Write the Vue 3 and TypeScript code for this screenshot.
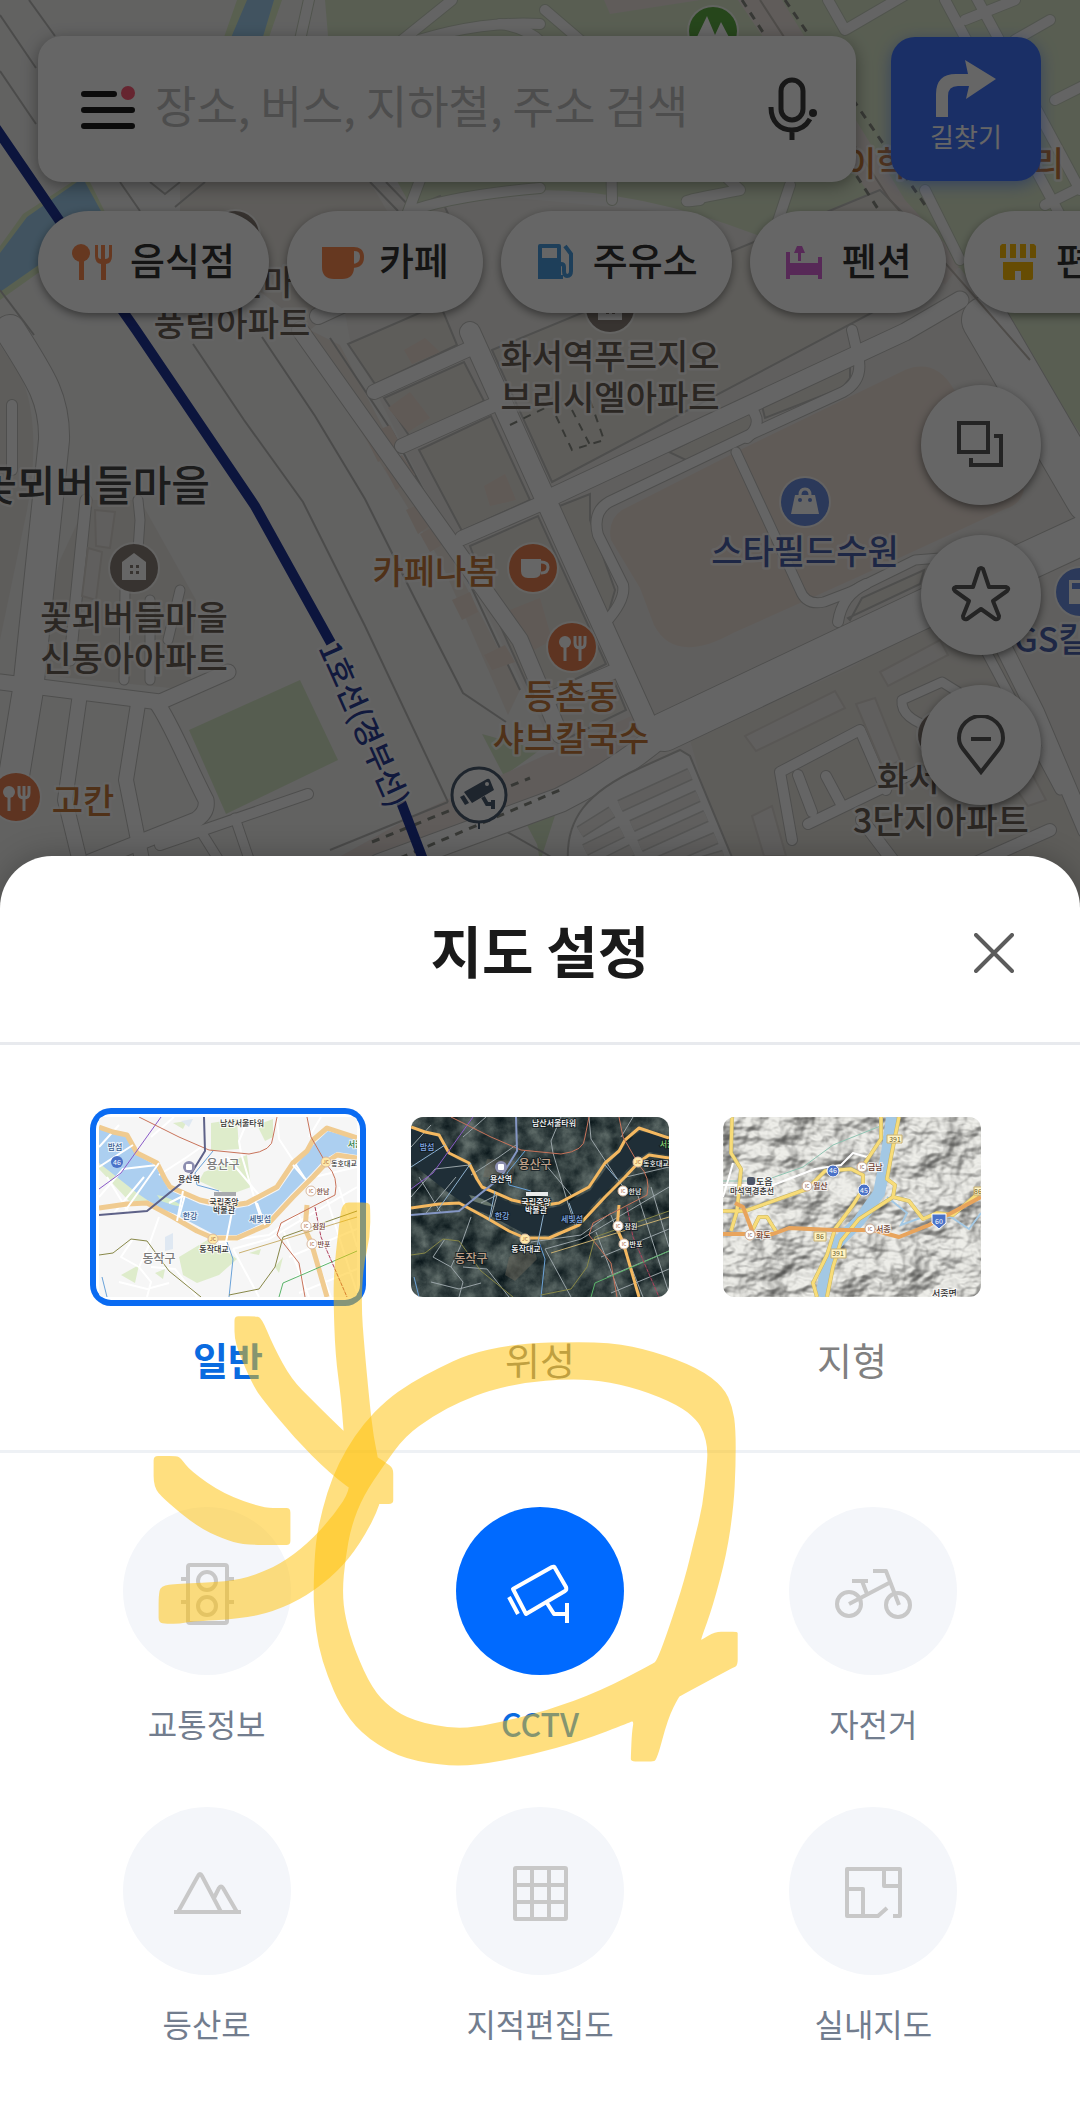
<script setup lang="ts">
import { ref } from 'vue'

type Point = [number, number]

interface Poi {
  kind: 'house' | 'cafe' | 'food' | 'bag' | 'gas' | 'tree'
  x: number
  y: number
}

interface MapLabel {
  text: string
  x: number
  y: number
  tone: 'brown' | 'orange' | 'blue' | 'town'
  anchor?: 'start' | 'middle' | 'end'
}

const keyword = ref('')
const mapType = ref('normal')
const active = ref<string[]>(['cctv'])

const chips = [
  { id: 'food', label: '음식점' },
  { id: 'cafe', label: '카페' },
  { id: 'gas', label: '주유소' },
  { id: 'pension', label: '펜션' },
  { id: 'store', label: '편의점' },
]

const mapTypes = [
  { id: 'normal', label: '일반' },
  { id: 'satellite', label: '위성' },
  { id: 'terrain', label: '지형' },
]

const features = [
  { id: 'traffic', label: '교통정보' },
  { id: 'cctv', label: 'CCTV' },
  { id: 'bike', label: '자전거' },
  { id: 'hiking', label: '등산로' },
  { id: 'cadastral', label: '지적편집도' },
  { id: 'indoor', label: '실내지도' },
]

function toggle(id: string) {
  active.value = active.value.includes(id)
    ? active.value.filter((f) => f !== id)
    : [...active.value, id]
}

const labels: MapLabel[] = [
  { text: '진마', x: 294, y: 295, tone: 'brown', anchor: 'end' },
  { text: '풍림아파트', x: 232, y: 336, tone: 'brown' },
  { text: '화서역푸르지오', x: 610, y: 369, tone: 'brown' },
  { text: '브리시엘아파트', x: 610, y: 410, tone: 'brown' },
  { text: '꽃뫼버들마을', x: 210, y: 501, tone: 'town', anchor: 'end' },
  { text: '꽃뫼버들마을', x: 134, y: 630, tone: 'brown' },
  { text: '신동아아파트', x: 134, y: 671, tone: 'brown' },
  { text: '화서', x: 877, y: 791, tone: 'brown', anchor: 'start' },
  { text: '3단지아파트', x: 941, y: 833, tone: 'brown' },
  { text: '카페나봄', x: 435, y: 584, tone: 'orange' },
  { text: '등촌동', x: 571, y: 709, tone: 'orange' },
  { text: '샤브칼국수', x: 571, y: 751, tone: 'orange' },
  { text: '고칸', x: 83, y: 813, tone: 'orange' },
  { text: '이학', x: 845, y: 176, tone: 'orange', anchor: 'start' },
  { text: '리', x: 1064, y: 176, tone: 'orange', anchor: 'end' },
  { text: '스타필드수원', x: 805, y: 564, tone: 'blue' },
  { text: 'GS칼텍스', x: 1014, y: 652, tone: 'blue', anchor: 'start' },
]

const pois: Poi[] = [
  { kind: 'house', x: 235, y: 235 },
  { kind: 'house', x: 610, y: 308 },
  { kind: 'house', x: 134, y: 568 },
  { kind: 'house', x: 942, y: 735 },
  { kind: 'cafe', x: 533, y: 568 },
  { kind: 'food', x: 572, y: 647 },
  { kind: 'food', x: 16, y: 797 },
  { kind: 'bag', x: 805, y: 502 },
  { kind: 'gas', x: 1080, y: 592 },
  { kind: 'tree', x: 713, y: 31 },
]

const blocks = [
  '348,344 440,304 457,345 375,384',
  '384,398 464,362 484,401 410,437',
  '419,450 491,416 530,500 462,531',
  '470,546 538,516 606,664 534,700 500,625',
  '548,706 612,676 626,710 560,742',
  '300,260 372,226 392,270 318,302',
  '388,218 440,196 470,262 410,290',
  '492,350 880,190 930,240 896,300 552,482',
  '669,452 752,411 757,425 740,440 690,462',
  '762,406 850,364 850,378 842,388 765,418',
  '552,509 590,494 590,520 615,590 604,628',
  '850,620 862,598 924,570 920,584 848,618',
]

const pinkLots = [
  '388,408 410,392 430,418 408,432',
  '365,436 390,425 402,448 378,462',
  '385,468 402,455 415,475 396,490',
  '406,510 428,500 438,520 418,534',
  '420,534 442,522 450,540 430,552',
  '452,600 470,592 478,612 462,620',
  '484,655 505,645 515,662 492,670',
  '484,486 505,474 516,500 490,506',
  '510,610 540,598 552,640 525,655',
  '404,350 425,338 440,352 412,364',
]

const smallHouses = [
  '88,548 102,552 96,600 82,596',
  '95,510 115,512 110,548 96,546',
  '745,736 835,691 845,708 756,751',
  '856,704 875,698 900,760 884,770',
  '880,672 940,640 948,655 888,686',
  '752,816 772,806 786,856 764,856',
  '1010,780 1030,770 1046,800 1028,806',
]

const casedRoads = [
  { d: 'M10 330 C42 380 55 400 54 440 L28 690 L10 800', w: 30 },
  { d: 'M86 500 L70 660', w: 11 },
  { d: 'M12 405 L12 470', w: 10 },
  { d: 'M138 500 L140 520 L136 580', w: 9 },
  { d: 'M125 590 L124 680 M150 600 L150 680 M180 590 L168 640', w: 9 },
  { d: 'M0 682 L160 702 L228 672', w: 15 },
  { d: 'M156 702 C170 720 190 770 206 800 Q208 812 196 820 L90 862', w: 15 },
  { d: 'M80 694 L65 800 L82 870', w: 14 },
  { d: 'M138 704 L126 780 L142 860', w: 14 },
  { d: 'M160 845 L308 794', w: 10 },
  { d: 'M200 830 L220 862 M235 818 L250 862', w: 9 },
  { d: 'M470 332 L652 735', w: 20 },
  { d: 'M374 392 L478 345 M402 446 L500 402 M462 538 L540 504 M538 704 L622 668', w: 14 },
  { d: 'M318 316 L470 246 M300 330 L520 640 L560 735', w: 16 },
  { d: 'M545 500 L905 332 L960 300', w: 17 },
  { d: 'M852 330 L858 356 Q864 380 843 392 L747 436 L609 502 Q592 512 598 535 L623 585 Q626 600 605 623', w: 10 },
  { d: 'M748 405 Q766 422 747 438', w: 10 },
  { d: 'M736 452 L800 590 Q806 606 824 602 L850 592 L915 560 L940 558', w: 9 },
  { d: 'M838 622 Q842 595 866 584', w: 10 },
  { d: 'M985 320 L1090 500', w: 46 },
  { d: 'M664 732 L930 606 L1090 532', w: 38 },
  { d: 'M664 732 Q620 770 560 800 L380 866', w: 24 },
  { d: 'M1000 640 L1036 712 L1086 830', w: 16 },
  { d: 'M980 640 L1060 790', w: 9 },
  { d: 'M792 840 L780 772 L860 730 L886 790 M798 775 L812 812 M826 776 L842 806 M808 824 L920 770', w: 10 },
  { d: 'M940 730 Q900 720 902 700 L942 682 L958 692', w: 9 },
  { d: 'M862 820 L900 870 M1050 830 L960 870', w: 12 },
]

const parkRoads = [
  'M310 -5 L300 40',
  'M452 0 L390 50 Q470 20 540 24',
  'M500 24 Q550 30 560 80 L610 90 L612 200',
  'M545 10 L580 40 L740 190 Q660 205 700 200',
  'M790 185 L775 230',
  'M828 0 L845 30 L905 -5',
  'M945 0 L1060 215 M975 -5 L1080 190 M965 20 L1015 0 M1015 40 L1050 20',
  'M1055 100 L1085 85 M1045 205 L1085 185',
  'M420 180 L408 212 Q450 196 540 188',
  'M925 190 L960 260',
]

const thinLines = [
  'M29 0 L55 36 M0 15 L36 68 M0 71 L36 124',
  'M120 182 L140 211 M150 182 L165 194 L180 182 M175 207 L205 182',
  'M0 290 L34 335',
  'M193 344 L244 420 L303 502 L365 626 L448 802',
  'M262 337 L315 416 L365 499 L413 595 L463 693 L506 722',
  'M330 338 L393 433 L448 537 L496 640 L520 690',
  'M370 182 L398 211 M386 182 L414 211',
  'M495 825 L560 862 M448 802 L330 850',
]

const parkingRows = [
  'M580 832 L612 812 M620 806 L690 774',
  'M585 850 L622 832 M632 826 L698 796',
  'M600 866 L632 850 M640 846 L706 816',
  'M650 866 L716 838',
  'M690 866 L724 856',
]

const riverShape = 'M0 12 L28 20 L38 38 L56 48 L70 73 L101 87 L128 93 L150 89 L180 73 L198 47 L216 26 L229 14 L258 22 L258 38 L238 35 L226 42 L212 57 L192 77 L166 105 L138 118 L116 118 L76 97 L60 91 L38 76 L0 46 Z'
const northRoad = 'M0 10 L14 15 L28 18 L38 36 L58 46 L66 62 L71 70 L101 83 L128 89 L148 86 L178 70 L194 46 L208 34 L214 23 L228 11 L258 21'
const southRoad = 'M0 91 L28 87 L48 86 L74 100 L98 114 L114 121 L138 121 L168 108 L194 80 L214 60 L228 45 L238 38 L258 41'
const localRoads = 'M0 80 L24 52 L58 48 M15 96 L45 60 M8 60 L30 96 M70 86 L86 78 L80 100 M60 100 L50 128 L40 150 L52 165 L48 180 M34 122 L22 140 L40 150 M52 150 L76 152 L98 180 M20 165 L48 172 L70 166 M105 28 L88 40 L60 58 M150 0 L140 24 L142 36 L158 90 L164 108 M178 0 L180 22 L205 60 L216 75 M134 132 L160 180 M134 132 L170 122 L258 70 M128 40 L145 60 L160 78 M185 115 L210 180 M200 98 L232 180 M215 60 L258 50 M190 140 L258 112 M196 160 L258 134 M200 176 L258 152 M226 76 L258 176 M240 70 L258 130 M210 20 L222 0 M0 30 L20 8 M75 0 L52 20 M120 125 L170 118 L200 96'
const miniLabels = [
  { text: '남산서울타워', x: 143, y: 9, s: 8, c: 'dark' },
  { text: '밤섬', x: 16, y: 33, s: 8, c: 'water' },
  { text: '용산구', x: 124, y: 52, s: 12, c: 'gu' },
  { text: '용산역', x: 90, y: 65, s: 8, c: 'dark' },
  { text: '국립중앙', x: 125, y: 88, s: 8, c: 'dark' },
  { text: '박물관', x: 125, y: 96, s: 8, c: 'dark' },
  { text: '한강', x: 91, y: 102, s: 8, c: 'water' },
  { text: '세빛섬', x: 161, y: 105, s: 8, c: 'water' },
  { text: '동작대교', x: 115, y: 135, s: 8, c: 'dark' },
  { text: '동작구', x: 60, y: 146, s: 12, c: 'gu' },
  { text: '동호대교', x: 245, y: 49, s: 7, c: 'dark' },
  { text: '한남', x: 224, y: 77, s: 7, c: 'ramp' },
  { text: '잠원', x: 220, y: 112, s: 7, c: 'ramp' },
  { text: '반포', x: 225, y: 130, s: 7, c: 'ramp' },
  { text: '서울', x: 256, y: 30, s: 8, c: 'park' },
]
const ramps = [
  { x: 227, y: 45, t: 'JC' },
  { x: 114, y: 122, t: 'JC' },
  { x: 212, y: 74, t: 'IC' },
  { x: 207, y: 109, t: 'IC' },
  { x: 213, y: 127, t: 'IC' },
]

/* Closed curve that passes through the midpoints of the given outline. */
function smooth(points: Point[]): string {
  const mid = (a: Point, b: Point) => `${(a[0] + b[0]) / 2} ${(a[1] + b[1]) / 2}`
  const n = points.length
  let d = `M${mid(points[n - 1], points[0])}`
  points.forEach((p, i) => {
    d += ` Q${p[0]} ${p[1]} ${mid(p, points[(i + 1) % n])}`
  })
  return d + 'Z'
}

const ringOuter: Point[] = [
  [738, 1636], [738, 1633], [728, 1633], [715, 1633], [702, 1641], [701, 1641], [713, 1608], [727, 1555],
  [734, 1507], [736, 1467], [736, 1430], [733, 1408], [724, 1388], [699, 1369], [654, 1352], [611, 1343],
  [547, 1343], [508, 1346], [468, 1355], [438, 1369], [410, 1384], [386, 1401], [363, 1425], [346, 1450],
  [332, 1478], [322, 1510], [315, 1543], [313, 1590], [314, 1617], [318, 1648], [327, 1677], [340, 1707],
  [360, 1734], [396, 1758], [440, 1767], [476, 1767], [529, 1757], [583, 1742], [630, 1724], [634, 1722],
  [632, 1734], [631, 1758], [631, 1763], [640, 1763], [652, 1763], [657, 1762], [668, 1720], [679, 1698],
  [681, 1697], [733, 1669], [738, 1667], [738, 1655],
]
const ringInner: Point[] = [
  [708, 1450], [704, 1433], [697, 1421], [679, 1406], [640, 1390], [600, 1381], [565, 1380], [526, 1383],
  [490, 1391], [461, 1402], [433, 1417], [405, 1437], [383, 1467], [363, 1497], [351, 1527], [345, 1560],
  [342, 1593], [345, 1620], [355, 1653], [372, 1690], [390, 1709], [413, 1722], [456, 1731], [494, 1725],
  [547, 1712], [601, 1692], [653, 1665], [657, 1662], [669, 1630], [685, 1580], [694, 1543], [703, 1507],
  [707, 1467],
]
const arrowShaft: Point[] = [
  [342, 1203], [355, 1203], [369, 1203], [370, 1208], [370, 1237], [363, 1267], [361, 1307], [364, 1347],
  [369, 1400], [373, 1437], [381, 1475], [382, 1503], [360, 1545], [337, 1573], [307, 1597], [273, 1613],
  [240, 1620], [188, 1623], [180, 1625], [166, 1625], [158, 1624], [158, 1614], [158, 1597], [160, 1587],
  [177, 1585], [227, 1583], [253, 1577], [280, 1565], [307, 1545], [333, 1517], [352, 1488], [345, 1457],
  [341, 1400], [335, 1357], [333, 1297], [334, 1267], [339, 1223],
]
const arrowHead: Point[] = [
  [234, 1326], [234, 1317], [242, 1317], [254, 1317], [261, 1318], [273, 1347], [291, 1380], [312, 1401],
  [353, 1442], [386, 1464], [393, 1469], [393, 1480], [393, 1498], [393, 1505], [384, 1505], [370, 1505],
  [360, 1497], [330, 1475], [293, 1438], [262, 1400], [253, 1387], [238, 1353], [234, 1338],
]
const arrowTip: Point[] = [
  [153, 1466], [153, 1457], [162, 1457], [176, 1457], [180, 1459], [190, 1472], [223, 1495], [263, 1509],
  [282, 1509], [290, 1509], [290, 1518], [290, 1538], [290, 1546], [282, 1546], [243, 1546], [223, 1540],
  [197, 1528], [163, 1500], [153, 1488],
]
const ringPath = smooth(ringOuter) + ' ' + smooth(ringInner)
const arrowPath = [arrowShaft, arrowHead, arrowTip].map(smooth).join(' ')
</script>

<template>
  <div class="screen">
    <div class="map-area">
      <svg class="map" viewBox="0 0 1080 920" preserveAspectRatio="xMidYMin slice" aria-hidden="true">
        <rect width="1080" height="920" fill="#f4f4f3" />
        <path d="M320 180 L1080 250 L1080 920 L740 900 L560 760 L350 340Z" fill="#f0eeeb" />
        <path d="M180 182 L370 182 L410 250 L310 330 L180 230Z" fill="#eae6e0" />
        <path d="M0 345 L20 375 C38 410 36 470 25 520 L0 640Z" fill="#ece9e3" />
        <path d="M88 500 L140 500 L196 600 L190 690 L30 674 L60 560Z" fill="#ece9e3" />
        <path d="M310 330 L340 345 L520 690 L508 715 L440 560 L360 430Z" fill="#efe9e2" />
        <path d="M325 0 H1080 V433 L1005 330 L960 268 L880 250 L757 235 Q640 190 540 190 Q470 194 413 210 L330 60Z" fill="#deebce" />
        <path d="M738 0 L782 0 L905 200 L962 262 L945 285 L880 210Z" fill="#efe6e2" />
        <path d="M604 0 L700 0 L610 14Z" fill="#efe6e2" />
        <path d="M237 0 H282 L268 40 H223Z M0 246 L23 214 L72 182 H90 L106 214 L62 256 L0 300Z" fill="#dff0c8" />
        <path d="M247 0 H274 L262 40 H230Z M0 253 L27 217 L77 182 L85 182 L102 213 L60 250 L0 292Z" fill="#a2d0f0" />
        <path d="M189 730 L300 680 L338 760 L226 814Z M482 734 L540 750 L504 776Z M517 806 L560 786 L540 850Z M530 800 L560 800 L540 862Z" fill="#d8e8c8" />
        <path d="M690 740 L850 668 L920 626 L1010 640 L1080 800 V920 H740Z" fill="#ebe8e2" />
        <path d="M740 450 L905 370 Q935 358 953 388 L1024 490 Q1020 505 1005 509 L871 571 L809 599 L733 633 Q675 665 654 625 L640 588 L611 540 Q607 520 622 510Z" fill="#f0e3da" />
        <path d="M330 862 L420 812 L640 712 L690 735 L540 800 L400 862Z" fill="#efe6e2" />

        <path v-for="d in thinLines" :key="d" :d="d" class="thin" />
        <polygon v-for="p in blocks" :key="p" :points="p" class="block" />
        <polygon v-for="p in pinkLots" :key="p" :points="p" fill="#f0e0d6" />
        <g v-for="r in casedRoads" :key="r.d" fill="none" stroke-linecap="round" stroke-linejoin="round">
          <path :d="r.d" stroke="#c3c3c0" :stroke-width="r.w + 2" />
        </g>
        <g v-for="r in casedRoads" :key="r.d + 'f'" fill="none" stroke-linecap="round" stroke-linejoin="round">
          <path :d="r.d" stroke="#fdfdfd" :stroke-width="r.w" />
        </g>
        <polygon v-for="p in smallHouses" :key="p" :points="p" class="house" />
        <g fill="none" stroke-linejoin="round" stroke-linecap="round">
          <path v-for="d in parkRoads" :key="d" :d="d" stroke="#c9d2c0" stroke-width="12" />
          <path v-for="d in parkRoads" :key="d + 'f'" :d="d" stroke="#fbfbfa" stroke-width="10" />
        </g>
        <path d="M583 808 Q600 786 640 768 L680 750 L690 756 L734 862 H568 Q566 830 583 808Z" fill="#fafafa" stroke="#c3c3c0" stroke-width="2" />
        <g fill="none" stroke="#d4d4d1" stroke-width="13">
          <path v-for="d in parkingRows" :key="d" :d="d" />
        </g>
        <g fill="none" stroke="#efeeec" stroke-width="10">
          <path v-for="d in parkingRows" :key="d + 'f'" :d="d" />
        </g>
        <g fill="none" stroke="#8a8d84" stroke-width="3" stroke-dasharray="8 7">
          <path d="M742 0 L882 215 M785 0 L925 205" />
          <path d="M372 842 L530 778 M400 858 L560 790" />
          <path d="M556 416 L572 450 L604 440 L590 400 M572 410 L590 445 M510 425 L545 408" stroke-width="2" />
        </g>
        <path d="M760 0 L890 200 L1030 360" fill="none" stroke="#c3bdb6" stroke-width="2" />
        <path d="M-4 128 L59 220 L136 330 L255 506 L331 643" class="rail" />
        <path d="M401 802 L424 862" class="rail" />

        <g v-for="(p, i) in pois" :key="i" :transform="`translate(${p.x} ${p.y})`">
          <circle r="26" fill="#ffffff" opacity=".7" />
          <template v-if="p.kind === 'house'">
            <circle r="24" fill="#8b8079" />
            <path d="M-12 12 V-6 L0 -15 L12 -6 V12Z" fill="#fff" />
            <path d="M-4 -3h3v3h-3zM2 -3h3v3h-3zM-4 3h3v3h-3zM2 3h3v3h-3z" fill="#8b8079" />
          </template>
          <template v-else-if="p.kind === 'cafe'">
            <circle r="24" fill="#ec8353" />
            <path d="M-12 -9 H8 V3 Q8 10 1 10 H-5 Q-12 10 -12 3Z" fill="#fff" />
            <path d="M8 -6 Q15 -6 15 -1 Q15 5 8 5" fill="none" stroke="#fff" stroke-width="3" />
          </template>
          <template v-else-if="p.kind === 'food'">
            <circle r="24" fill="#ec8353" />
            <circle cx="-7" cy="-5" r="6" fill="#fff" />
            <path d="M-7 0V14M8 -11V14M3 -11V-4Q3 1 8 1Q13 1 13 -4V-11" fill="none" stroke="#fff" stroke-width="3" />
          </template>
          <template v-else-if="p.kind === 'bag'">
            <circle r="24" fill="#6c8ee0" />
            <path d="M-10 -7H10L14 12H-14Z" fill="#fff" />
            <path d="M-5 -7Q-5 -13 0 -13Q5 -13 5 -7" fill="none" stroke="#fff" stroke-width="3" />
            <circle cx="-5" cy="-2" r="2" fill="#6c8ee0" /><circle cx="5" cy="-2" r="2" fill="#6c8ee0" />
          </template>
          <template v-else-if="p.kind === 'gas'">
            <circle r="24" fill="#6c8ee0" />
            <path d="M-11 -12H6V12H-11Z" fill="#fff" /><path d="M-8 -9H3V-3H-8Z" fill="#6c8ee0" />
          </template>
          <template v-else>
            <circle r="24" fill="#5fae45" />
            <path d="M-18 10 L-6 -15 L2 4 L8 -9 L18 10Z" fill="#fff" />
          </template>
        </g>

        <g transform="translate(479 795)">
          <path d="M0 27V34" stroke="#4c5c70" stroke-width="2" />
          <circle r="27" fill="#fff" stroke="#4c5c70" stroke-width="3" />
          <path d="M-15 -3 L8 -16 Q10 -17 11 -15 L15 -5 L-7 8Z M-19 2 L-15 0 L-10 8 L-14 10Z" fill="#4c5c70" />
          <path d="M4 2 L8 9 H14 M14 5V14" fill="none" stroke="#4c5c70" stroke-width="4" />
          <circle cx="8" cy="-11" r="2" fill="#fff" />
        </g>

        <text v-for="(l, i) in labels" :key="i" :x="l.x" :y="l.y" :text-anchor="l.anchor ?? 'middle'" :class="['place', l.tone]">{{ l.text }}</text>
        <text class="place line-name" transform="translate(318 648) rotate(66)">1호선(경부선)</text>
      </svg>

      <div class="controls">
        <header class="top-bar">
          <form class="search" role="search" @submit.prevent>
            <button type="button" class="plain menu" aria-label="메뉴">
              <svg width="54" height="48" viewBox="0 0 54 48">
                <path d="M3 9H33M3 25H51M3 41H51" stroke="#1c1c1c" stroke-width="6" stroke-linecap="round" />
                <circle cx="47" cy="8" r="7" fill="#ff5c78" />
              </svg>
            </button>
            <input v-model="keyword" type="text" placeholder="장소, 버스, 지하철, 주소 검색" aria-label="장소, 버스, 지하철, 주소 검색" />
            <button type="button" class="plain mic" aria-label="음성 검색">
              <svg width="50" height="64" viewBox="0 0 50 64" fill="none" stroke="#3c3c3c" stroke-width="5">
                <rect x="13" y="3" width="22" height="40" rx="11" />
                <path d="M3 30C3 46 13 53 24 53C33 53 38 49 42 42M24 53V63" />
                <circle cx="45" cy="36" r="4" fill="#3c3c3c" stroke="none" />
              </svg>
            </button>
          </form>
          <button type="button" class="directions">
            <svg width="60" height="58" viewBox="0 0 60 58">
              <path d="M0 57V34Q0 14 20 14H32L29 0L60 19L30 39L33 26H22Q12 26 12 36V57Z" fill="#fff" />
            </svg>
            <span>길찾기</span>
          </button>
        </header>

        <nav class="chips" aria-label="주변 검색">
          <button v-for="c in chips" :key="c.id" type="button" class="chip">
            <svg width="40" height="40" viewBox="0 0 40 40">
              <g v-if="c.id === 'food'" fill="#ff8c52">
                <circle cx="9" cy="11" r="9" /><path d="M7 18H12V38H7Z" />
                <path d="M23 3H26V14Q26 17 29 17V3H33V17Q37 17 37 14V3H40V14Q40 21 34 22V38H29V22Q23 21 23 14Z" />
              </g>
              <g v-else-if="c.id === 'cafe'">
                <path d="M1 5H33V25Q33 37 21 37H13Q1 37 1 25Z" fill="#ff8c52" />
                <path d="M31 7Q41 6 41 15Q41 24 31 24" fill="none" stroke="#ff8c52" stroke-width="4" />
              </g>
              <g v-else-if="c.id === 'gas'">
                <path fill-rule="evenodd" d="M5 2H24Q26 2 26 4V33H28V37H3V4Q3 2 5 2ZM7 6V16H22V6Z" fill="#4b9fe0" />
                <path d="M30 4L36 12V29Q36 34 32 34Q29 34 29 29V25Q29 22 26 22" fill="none" stroke="#4b9fe0" stroke-width="4" />
              </g>
              <g v-else-if="c.id === 'pension'" fill="#d968d9">
                <path d="M2 10H6V21H34V15H38V37H34V33H6V37H2Z M13 4H18L21 11H10Z M14 11H17V19H14Z" />
              </g>
              <g v-else fill="#ffbd08">
                <path d="M4 2H8V16H2V4ZM12 2H18V16H12ZM22 2H28V16H22ZM32 2H36L38 4V16H32Z" />
                <path d="M5 20H35V36Q35 38 33 38H23V29H17V38H7Q5 38 5 36Z" />
              </g>
            </svg>
            <span>{{ c.label }}</span>
          </button>
        </nav>

        <div class="tools">
          <button type="button" class="round" aria-label="지도 설정">
            <svg width="60" height="60" viewBox="0 0 60 60" fill="none" stroke="#5a5a5a" stroke-width="4">
              <path d="M8 8H37V37H8ZM43 21H50V50H20V43" />
            </svg>
          </button>
          <button type="button" class="round" aria-label="즐겨찾기">
            <svg width="60" height="60" viewBox="0 0 60 60" fill="none" stroke="#5a5a5a" stroke-width="4" stroke-linejoin="round">
              <path d="M28 4Q30 2 32 4L38 22H55Q59 23 56 26L42 36L48 51Q48 55 44 54L30 44L16 54Q12 55 12 51L18 36L4 26Q1 23 5 22H22Z" />
            </svg>
          </button>
          <button type="button" class="round" aria-label="핀 숨기기">
            <svg width="60" height="60" viewBox="0 0 60 60" fill="none" stroke="#5a5a5a" stroke-width="4">
              <path d="M30 57L12 34Q8 29 8 23A22 22 0 0 1 52 23Q52 29 48 34ZM20 24H40" />
            </svg>
          </button>
        </div>
      </div>
      <div class="scrim"></div>
    </div>

    <section class="sheet" role="dialog" aria-labelledby="sheet-title">
      <header class="sheet-head">
        <h1 id="sheet-title">지도 설정</h1>
        <button type="button" class="plain close" aria-label="닫기">
          <svg width="40" height="40" viewBox="0 0 40 40">
            <path d="M2 2L38 38M38 2L2 38" stroke="#5c5c5c" stroke-width="4" stroke-linecap="round" />
          </svg>
        </button>
      </header>

      <div class="types" role="radiogroup" aria-label="지도 종류">
        <label v-for="t in mapTypes" :key="t.id" class="type">
          <input v-model="mapType" type="radio" name="map-type" :value="t.id" />
          <span class="thumb">
            <svg v-if="t.id !== 'terrain'" :class="['mini', t.id]" viewBox="0 0 258 180">
              <defs v-if="t.id === 'satellite'">
                <filter id="ground" x="0" y="0" width="100%" height="100%" color-interpolation-filters="sRGB">
                  <feTurbulence type="fractalNoise" baseFrequency="0.06" numOctaves="5" seed="4" />
                  <feColorMatrix values="0.5 0 0 0 -0.03  0.5 0 0 0 0.02  0.46 0 0 0 0.04  0 0 0 0 1" />
                </filter>
              </defs>
              <rect v-if="t.id === 'normal'" width="258" height="180" fill="#f6f6f6" />
              <rect v-else width="258" height="180" filter="url(#ground)" />
              <g v-if="t.id === 'normal'" fill="#deeccb">
                <path d="M112 6L138 2L140 32L112 34Z M105 55L148 38L152 70L130 78L100 64Z M80 140L110 122L138 142L120 158L98 166L84 158Z M22 158L40 148L36 166Z M56 156L66 152L64 162Z M74 6L88 4L84 12Z M158 8L174 2L174 20L166 24Z M176 150L184 140L180 156Z M0 40L22 60L50 84L30 84L0 52Z M150 136L162 132L160 138Z" />
                <path d="M66 120L74 116L74 132L66 134Z M82 4L94 2L90 10Z" fill="#dfe8f2" />
              </g>
              <path v-else d="M98 140L122 128L126 142L104 164L94 158Z M76 42L104 44L102 62L72 60Z" fill="#6f685c" opacity=".45" />
              <path :d="riverShape" class="river" />
              <path d="M58 78Q72 80 84 90Q72 88 62 84Z" :fill="t.id === 'normal' ? '#d3ebc9' : '#65736a'" />
              <path :d="localRoads" class="local" />
              <path :d="northRoad" class="bank" />
              <path :d="southRoad" class="bank" />
              <path d="M208 88L206 112L212 125L228 180" class="bank" />
              <path d="M0 50L34 28M26 94L60 46M78 104L84 74M158 86L166 108M194 48L206 62M134 90L126 130" class="bridge" />
              <g fill="none" stroke-width="1">
                <path d="M0 72L22 56L62 0" stroke="#8a5ac8" />
                <path d="M40 0L80 20L110 33L150 37Q174 34 174 20L178 0M208 0L212 20L228 48Q240 60 236 78L182 106L178 118L200 146L206 180" stroke="#c8735a" />
                <path d="M105 0L106 34L90 60L48 94L0 98" :stroke="t.id === 'normal' ? '#5e6288' : '#8496c4'" stroke-width="2" />
                <path d="M114 34L96 56L98 68L120 74M128 125L134 142L130 180M3 160L8 180" stroke="#6aa2d8" />
                <path d="M0 138L14 136L32 122L48 124L70 154L102 180M130 178L160 172L176 150L184 120L258 94" stroke="#878748" />
                <path d="M180 180L184 166L258 134" stroke="#5bb46a" />
                <path d="M216 90L222 120L248 180" stroke="#b0405c" stroke-dasharray="4 1" />
                <path d="M140 136L258 100" stroke="#c9b070" />
              </g>
              <path d="M115 75H137V79H115Z" :fill="t.id === 'normal' ? '#a8aaae' : '#e8eaea'" />
              <g v-for="r in ramps" :key="r.x">
                <circle :cx="r.x" :cy="r.y" r="5" :fill="r.t === 'JC' ? '#ffe9a8' : '#fff'" stroke="#d9b9a0" stroke-width="1" />
                <text :x="r.x" :y="r.y + 2" font-size="5" text-anchor="middle" fill="#a35a30">{{ r.t }}</text>
              </g>
              <circle cx="90" cy="50" r="6" fill="#8c8eb0" />
              <rect x="87" y="47" width="6" height="6" rx="1" fill="#fff" />
              <g v-if="t.id === 'normal'">
                <circle cx="18" cy="45" r="6" fill="#4a72c8" />
                <text x="18" y="48" font-size="7" text-anchor="middle" fill="#fff">46</text>
              </g>
              <text v-for="l in miniLabels" :key="l.text" :x="l.x" :y="l.y" :font-size="l.s" text-anchor="middle" :class="['mini-label', l.c]">{{ l.text }}</text>
            </svg>

            <svg v-else class="mini" viewBox="0 0 258 180">
              <defs>
                <filter id="relief" x="0" y="0" width="100%" height="100%" color-interpolation-filters="sRGB">
                  <feTurbulence type="fractalNoise" baseFrequency="0.022 0.03" numOctaves="4" seed="11" />
                  <feDiffuseLighting surfaceScale="16" diffuseConstant="1.1" lighting-color="#e4e4e0">
                    <feDistantLight azimuth="225" elevation="58" />
                  </feDiffuseLighting>
                </filter>
              </defs>
              <rect width="258" height="180" fill="#dcdcd8" />
              <rect width="258" height="180" filter="url(#relief)" opacity=".6" />
              <path d="M169 0L164 36L156 76L136 104L112 128L104 150L98 180" fill="none" stroke="#a3c8e4" stroke-width="12" />
              <path d="M164 80L184 96L178 108L200 100L228 100L246 112L258 96" fill="none" stroke="#a3c8e4" stroke-width="2" />
              <g fill="none" stroke-linejoin="round">
                <path d="M0 64H40L80 50L110 28L160 8" stroke="#8fc4b2" />
                <path d="M0 68H50L92 52L118 48L130 36L144 40L158 24M0 80L6 60L10 46" stroke="#fff" stroke-width="2" />
                <g stroke="#c4b468" stroke-width="4">
                  <path d="M9 0L8 36L18 52L14 94L8 114M0 94H22L84 72L102 54L128 52L140 58V72L130 88L112 112L104 138L90 166L94 180M158 0V22L142 46M176 0L168 40L164 62L172 68L170 80L136 102L118 124L110 150L104 180M170 80L186 84L200 102L214 96L230 98L258 74M30 112L36 100L44 100L54 116" />
                </g>
                <g stroke="#f8dc78" stroke-width="3">
                  <path d="M9 0L8 36L18 52L14 94L8 114M0 94H22L84 72L102 54L128 52L140 58V72L130 88L112 112L104 138L90 166L94 180M158 0V22L142 46M176 0L168 40L164 62L172 68L170 80L136 102L118 124L110 150L104 180M170 80L186 84L200 102L214 96L230 98L258 74M30 112L36 100L44 100L54 116" />
                </g>
                <path d="M0 117H50L66 111L110 113H150L176 120L206 108L258 80M12 86L20 90L30 116" stroke="#e8a45c" stroke-width="4" />
              </g>
              <g fill="#4a72c8" stroke="#fff" stroke-width="1">
                <circle cx="110" cy="54" r="6" /><circle cx="141" cy="73" r="6" />
                <path d="M209 97H223V106L216 112L209 106Z" />
              </g>
              <g font-size="7" text-anchor="middle" fill="#fff">
                <text x="110" y="56">46</text><text x="141" y="76">45</text><text x="216" y="107">60</text>
              </g>
              <g fill="#fff4c4" stroke="#c8b070" stroke-width="1">
                <path d="M164 18H179V26H164ZM108 132H123V141H108ZM91 115H103V124H91ZM251 70H262V78H251Z" />
              </g>
              <g font-size="7" text-anchor="middle" fill="#6b5a28">
                <text x="172" y="25">391</text><text x="115" y="139">391</text><text x="97" y="122">86</text><text x="255" y="77">86</text>
              </g>
              <g fill="#fff" stroke="#c8a890" stroke-width="1">
                <circle cx="139" cy="50" r="5" /><circle cx="84" cy="69" r="5" /><circle cx="27" cy="118" r="5" /><circle cx="147" cy="112" r="5" />
              </g>
              <g font-size="5" text-anchor="middle" fill="#805040">
                <text x="139" y="52">IC</text><text x="84" y="71">IC</text><text x="27" y="120">IC</text><text x="147" y="114">IC</text>
              </g>
              <rect x="24" y="60" width="8" height="8" rx="2" fill="#4d5668" />
              <g class="mini-label ramp" font-size="8">
                <text x="145" y="53">금남</text><text x="90" y="72">월산</text><text x="33" y="121">화도</text><text x="153" y="115">서종</text>
              </g>
              <g class="mini-label dark" font-size="8">
                <text x="33" y="68" font-size="9">도읍</text><text x="7" y="77">마석역경춘선</text><text x="209" y="180" font-size="9">서종면</text>
              </g>
            </svg>
          </span>
          <span class="type-name">{{ t.label }}</span>
        </label>
      </div>

      <div class="features">
        <button v-for="f in features" :key="f.id" type="button" class="plain feature" :aria-pressed="active.includes(f.id)" @click="toggle(f.id)">
          <span class="disc">
            <svg width="168" height="168" viewBox="0 0 168 168" fill="none" stroke="currentColor" stroke-width="4" stroke-linejoin="round">
              <g v-if="f.id === 'traffic'">
                <rect x="65" y="58" width="39" height="58" rx="2" />
                <circle cx="84" cy="74" r="9" /><circle cx="84" cy="99" r="9" />
                <path d="M58 72H65M104 72H111M58 95H65M104 95H111" />
              </g>
              <g v-else-if="f.id === 'cctv'">
                <path d="M57 82L96 60Q98 59 99 61L110 80Q111 83 109 84L70 107Z" />
                <path d="M53 90L62 107M91 96L98 107H111M111 96V116" />
              </g>
              <g v-else-if="f.id === 'bike'">
                <circle cx="60" cy="97" r="12" /><circle cx="109" cy="98" r="12" />
                <path d="M60 97L100 76M84 64H97L110 98M63 74H79M73 74L78 87" />
              </g>
              <g v-else-if="f.id === 'hiking'">
                <path d="M51 105H118M55 105L75 69Q77 65 79 69L98 105M91 91L96 81Q98 78 100 81L114 105" />
              </g>
              <g v-else-if="f.id === 'cadastral'">
                <rect x="59" y="61" width="51" height="51" rx="1" />
                <path d="M76 61V112M93 61V112M59 78H110M59 95H110" />
              </g>
              <g v-else>
                <path d="M98 101L89 109H58V62H111V109H104M58 82H74V109M95 62V79H111" />
              </g>
            </svg>
          </span>
          <span class="feature-name">{{ f.label }}</span>
        </button>
      </div>

      <svg class="marker" viewBox="0 856 1080 1260" preserveAspectRatio="xMidYMin meet" aria-hidden="true">
        <path :d="ringPath" fill-rule="evenodd" />
        <path :d="arrowPath" />
      </svg>
    </section>
  </div>
</template>

<style>
body {
  margin: 0;
  background: #ffffff;
}
</style>

<style scoped>
.screen {
  font-family: 'Noto Sans CJK KR', 'Noto Sans', sans-serif;
  overflow: hidden;
}

button,
input {
  font-family: inherit;
}

.plain {
  display: flex;
  padding: 0;
  border: 0;
  background: none;
}

.map-area {
  position: relative;
  height: 908px;
  overflow: hidden;
}

.map {
  position: absolute;
  inset: 0;
  width: 100%;
  height: 100%;
}

.thin {
  fill: none;
  stroke: #bcbcba;
  stroke-width: 2;
}

.block {
  fill: #ece9e2;
  stroke: #c3c3c0;
  stroke-width: 2;
}

.house {
  fill: #f1eeea;
  stroke: #dedad4;
  stroke-width: 2;
}

.rail {
  fill: none;
  stroke: #203598;
  stroke-width: 10;
}

.place {
  font-size: 34px;
  font-weight: 500;
  paint-order: stroke;
  stroke: #ffffffb0;
  stroke-width: 5px;
  stroke-linejoin: round;
}

.brown {
  fill: #6d6159;
}

.orange {
  fill: #c87c3c;
}

.blue {
  fill: #4c63ac;
}

.town {
  font-size: 42px;
  fill: #484848;
}

.line-name {
  font-size: 30px;
  fill: #2b3f9a;
}

.controls {
  position: relative;
  padding: 36px 39px 0 38px;
}

.top-bar {
  display: flex;
  align-items: center;
  gap: 35px;
}

.search {
  flex: 1;
  min-width: 0;
  display: flex;
  align-items: center;
  height: 146px;
  box-sizing: border-box;
  padding: 0 38px 0 43px;
  border-radius: 24px;
  background: #ffffff;
  box-shadow: 0 4px 16px #00000060;
}

.search input {
  flex: 1;
  min-width: 0;
  padding: 0 0 8px 20px;
  border: 0;
  background: none;
  font-size: 45px;
  line-height: 60px;
  color: #222222;
  outline: none;
}

.search input::placeholder {
  color: #c0c0c0;
  opacity: 1;
}

.directions {
  display: flex;
  flex-direction: column;
  align-items: center;
  justify-content: center;
  width: 150px;
  height: 144px;
  padding: 0 0 4px;
  border: 0;
  border-radius: 24px;
  background: #4276ff;
  color: #ffffff;
  font-size: 26px;
  line-height: 36px;
  box-shadow: 0 4px 16px #4276ff90;
}

.chips {
  display: flex;
  gap: 18px;
  margin: 29px 0 0;
}

.chip {
  flex: none;
  display: flex;
  align-items: center;
  gap: 18px;
  height: 102px;
  padding: 0 34px;
  border: 0;
  border-radius: 51px;
  background: #ffffff;
  color: #333333;
  font-size: 38px;
  font-weight: 500;
  box-shadow: 0 3px 8px #00000070;
}

.chip span {
  padding-bottom: 8px;
}

.chip svg {
  overflow: visible;
}

.tools {
  display: flex;
  flex-direction: column;
  align-items: flex-end;
  gap: 30px;
  margin-top: 72px;
}

.round {
  display: flex;
  align-items: center;
  justify-content: center;
  width: 120px;
  height: 120px;
  padding: 0;
  border: 0;
  border-radius: 50%;
  background: #ffffff;
  box-shadow: 0 3px 8px #00000080;
}

.scrim {
  position: absolute;
  inset: 0;
  background: #00000099;
}

.sheet {
  position: relative;
  margin-top: -52px;
  border-radius: 52px 52px 0 0;
  background: #ffffff;
  box-shadow: 0 0 30px #00000040;
}

.sheet-head {
  display: flex;
  align-items: center;
  justify-content: center;
  height: 186px;
  border-bottom: 3px solid #e8eaee;
}

h1 {
  margin: 0;
  font-size: 56px;
  line-height: 80px;
  font-weight: 700;
  color: #1a1a1a;
}

.close {
  position: absolute;
  top: 77px;
  right: 66px;
}

.types {
  display: grid;
  grid-template-columns: repeat(3, 1fr);
  justify-items: center;
  padding: 72px 72px 63px;
  border-bottom: 3px solid #eef1f5;
}

.type {
  display: flex;
  flex-direction: column;
  align-items: center;
  gap: 36px;
}

.type input {
  position: absolute;
  opacity: 0;
}

.thumb {
  display: block;
  width: 258px;
  height: 180px;
  border-radius: 12px;
}

.mini {
  display: block;
  width: 100%;
  height: 100%;
  border-radius: 12px;
}

.type input:checked + .thumb {
  box-shadow: 0 0 0 3px #ffffff, 0 0 0 9px #0a6bf2;
}

.type input:checked + .thumb .mini {
  border-radius: 4px;
}

.type-name {
  padding-bottom: 2px;
  font-size: 38px;
  line-height: 52px;
  color: #808080;
}

.type input:checked ~ .type-name {
  font-weight: 700;
  color: #0a6be0;
}

.river {
  fill: #accff0;
}

.local {
  fill: none;
  stroke: #ffffff;
  stroke-width: 2;
}

.bank {
  fill: none;
  stroke: #f0cb90;
  stroke-width: 5;
  stroke-linejoin: round;
}

.bridge {
  fill: none;
  stroke: #ffffff;
  stroke-width: 2;
}

.satellite .river {
  fill: #1f2e37;
}

.satellite .local {
  stroke: #9aa4a8;
  stroke-width: 1;
}

.satellite .bank {
  stroke: #f4b860;
  stroke-width: 3;
}

.satellite .bridge {
  stroke: #8fb2d0;
  stroke-width: 1;
}

.mini-label {
  font-weight: 500;
  paint-order: stroke;
  stroke: #ffffffc0;
  stroke-width: 2px;
}

.mini-label.dark {
  fill: #303030;
}

.mini-label.water {
  fill: #3c6090;
}

.mini-label.gu {
  fill: #7c7c7c;
}

.mini-label.ramp {
  fill: #6e4030;
}

.mini-label.park {
  fill: #2d7a3a;
}

.satellite .mini-label {
  fill: #ffffff;
  stroke: #10181cc0;
}

.satellite .mini-label.water {
  fill: #80a8e4;
}

.satellite .mini-label.gu {
  fill: #c0a088;
}

.satellite .mini-label.park {
  fill: #86d070;
}

.features {
  display: grid;
  grid-template-columns: repeat(3, 1fr);
  justify-items: center;
  row-gap: 62px;
  padding: 54px 40px 69px;
}

.feature {
  flex-direction: column;
  align-items: center;
  gap: 26px;
}

.disc {
  display: block;
  width: 168px;
  height: 168px;
  border-radius: 50%;
  background: #f4f6fa;
  color: #c8c8c8;
}

.disc svg {
  display: block;
}

.feature-name {
  font-size: 32px;
  line-height: 44px;
  color: #727d8e;
}

.feature[aria-pressed='true'] .disc {
  background: #006aff;
  color: #ffffff;
}

.feature[aria-pressed='true'] .feature-name {
  font-weight: 500;
  color: #0a6be0;
}

.marker {
  position: absolute;
  inset: 0;
  width: 100%;
  height: 100%;
  pointer-events: none;
  fill: #ffbf00;
  fill-opacity: 0.5;
}
</style>
